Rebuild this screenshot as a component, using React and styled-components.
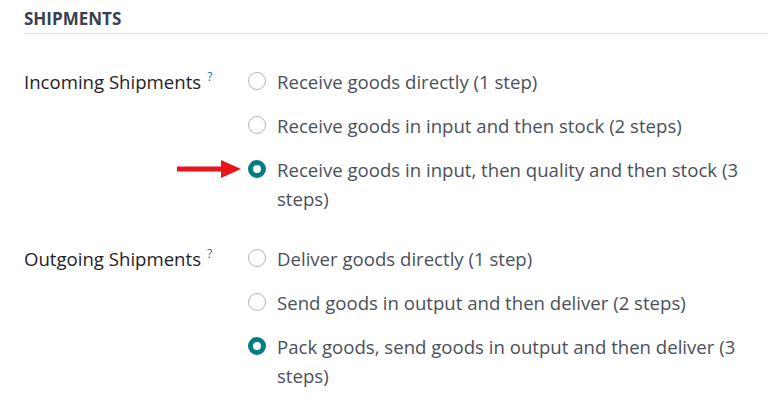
import React from 'react'
import styled, { createGlobalStyle } from 'styled-components'

const Global = createGlobalStyle`
  body {
    margin: 0;
    background: #fff;
    font-family: "Open Sans", "Noto Sans", sans-serif;
  }
`

const Page = styled.div`
  padding: 7px 0 0 24px;
`

const Heading = styled.h3`
  margin: 0;
  padding-bottom: 2px;
  font-size: 17px;
  line-height: 24px;
  font-weight: 700;
  color: #374151;
  border-bottom: 1px solid #dee2e6;
`

const Groups = styled.div`
  display: flex;
  flex-direction: column;
  gap: 31px;
  padding-top: 33px;
  padding-right: 18px;
`

const Setting = styled.div`
  display: grid;
  grid-template-columns: 223px 1fr;
`

const Label = styled.div`
  font-size: 18.6px;
  line-height: 29px;
  color: #1f2329;
`

const Help = styled.sup`
  color: #1a6f9a;
  font-size: 12px;
  margin-left: 6px;
  vertical-align: 8px;
  line-height: 0;
`

const Options = styled.div`
  display: flex;
  flex-direction: column;
  gap: 15px;
`

const Option = styled.label`
  position: relative;
  display: flex;
  align-items: flex-start;
  gap: 11px;
  font-size: 18.6px;
  line-height: 29px;
  color: #4b505a;
`

const Radio = styled.span`
  flex: none;
  box-sizing: border-box;
  width: 18px;
  height: 18px;
  margin-top: 5px;
  margin-left: 1px;
  border-radius: 50%;
  border: ${p => (p.$checked ? '5px solid #017e84' : '1px solid #adb5bd')};
  background: #fff;
`

const Arrow = styled.svg`
  position: absolute;
  left: -70px;
  top: 5px;
`

const incoming = [
  'Receive goods directly (1 step)',
  'Receive goods in input and then stock (2 steps)',
  'Receive goods in input, then quality and then stock (3 steps)',
]

const outgoing = [
  'Deliver goods directly (1 step)',
  'Send goods in output and then deliver (2 steps)',
  'Pack goods, send goods in output and then deliver (3 steps)',
]

function Group({ label, options, checked, arrow }) {
  return (
    <Setting>
      <Label>
        {label}
        <Help>?</Help>
      </Label>
      <Options>
        {options.map((text, i) => (
          <Option key={text}>
            {arrow && i === checked && (
              <Arrow width="64" height="18" viewBox="0 0 64 18">
                <rect x="0" y="6.5" width="46" height="5" fill="#e8141c" />
                <polygon points="44,0 64,9 44,18" fill="#e8141c" />
              </Arrow>
            )}
            <Radio $checked={i === checked} />
            <span>{text}</span>
          </Option>
        ))}
      </Options>
    </Setting>
  )
}

export default function App() {
  return (
    <>
      <Global />
      <Page>
        <Heading>SHIPMENTS</Heading>
        <Groups>
          <Group label="Incoming Shipments" options={incoming} checked={2} arrow />
          <Group label="Outgoing Shipments" options={outgoing} checked={2} />
        </Groups>
      </Page>
    </>
  )
}
